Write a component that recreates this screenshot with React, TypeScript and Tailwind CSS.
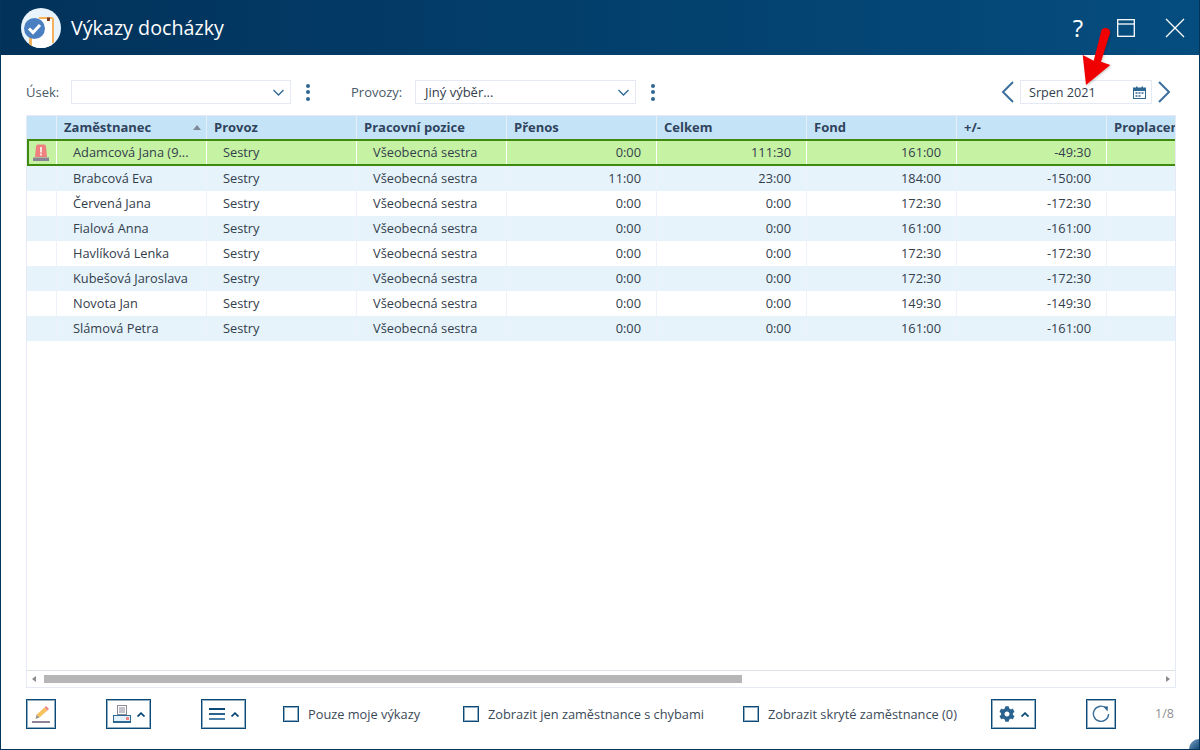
import { FaCog } from "react-icons/fa"

const rows = [
  { name: "Adamcová Jana (9...", prenos: "0:00", celkem: "111:30", fond: "161:00", diff: "-49:30" },
  { name: "Brabcová Eva", prenos: "11:00", celkem: "23:00", fond: "184:00", diff: "-150:00" },
  { name: "Červená Jana", prenos: "0:00", celkem: "0:00", fond: "172:30", diff: "-172:30" },
  { name: "Fialová Anna", prenos: "0:00", celkem: "0:00", fond: "161:00", diff: "-161:00" },
  { name: "Havlíková Lenka", prenos: "0:00", celkem: "0:00", fond: "172:30", diff: "-172:30" },
  { name: "Kubešová Jaroslava", prenos: "0:00", celkem: "0:00", fond: "172:30", diff: "-172:30" },
  { name: "Novota Jan", prenos: "0:00", celkem: "0:00", fond: "149:30", diff: "-149:30" },
  { name: "Slámová Petra", prenos: "0:00", celkem: "0:00", fond: "161:00", diff: "-161:00" },
]

const headers = ["Provoz", "Pracovní pozice", "Přenos", "Celkem", "Fond", "+/-", "Proplacené"]

const btn = "h-[30px] border border-[#0b4a78] shadow-[inset_0_0_0_1px_rgba(11,74,120,0.45)] flex items-center"

function AppLogo() {
  return (
    <svg width="40" height="40" viewBox="0 0 40 40" className="shrink-0">
      <defs>
        <clipPath id="logoClip">
          <circle cx="20" cy="20" r="20" />
        </clipPath>
      </defs>
      <circle cx="20" cy="20" r="20" fill="#e8f3fb" />
      <g clipPath="url(#logoClip)">
        <rect x="8" y="26" width="3" height="13" fill="#f5b25c" />
        <path d="M18 9 H30 A3 3 0 0 1 33 12 V35 H31 V11 H18 Z" fill="#f5b25c" />
        <rect x="11" y="11" width="20" height="29" fill="#ffffff" />
        <rect x="26" y="9.5" width="3" height="3.5" fill="#7a3b22" />
      </g>
      <circle cx="13.5" cy="20.5" r="10.5" fill="#4a7fc1" />
      <path d="M8 20.5 L12 24.5 L19 17" fill="none" stroke="#ffffff" strokeWidth="3" />
    </svg>
  )
}

function Dots() {
  return (
    <div className="flex flex-col gap-[2.5px] w-[4px]">
      <span className="w-[4px] h-[4px] rounded-full bg-[#2f6793]" />
      <span className="w-[4px] h-[4px] rounded-full bg-[#2f6793]" />
      <span className="w-[4px] h-[4px] rounded-full bg-[#2f6793]" />
    </div>
  )
}

function Caret() {
  return (
    <svg width="11" height="7" viewBox="0 0 11 7" fill="none" stroke="#2f6793" strokeWidth="1.3">
      <path d="M0.5 1 L5.5 6 L10.5 1" />
    </svg>
  )
}

function UpCaret() {
  return (
    <svg width="8" height="5" viewBox="0 0 8 5" fill="none" stroke="#0b4a78" strokeWidth="1.8" className="shrink-0">
      <path d="M0.5 4.5 L4 1.2 L7.5 4.5" />
    </svg>
  )
}

function Arrow({ d }: { d: string }) {
  return (
    <svg width="13" height="22" viewBox="0 0 13 22" fill="none" stroke="#3d6f9c" strokeWidth="2" className="shrink-0">
      <path d={d} />
    </svg>
  )
}

function Alarm() {
  return (
    <svg width="16" height="17" viewBox="0 0 16 17">
      <path d="M2 13 L3 2.5 A2 2 0 0 1 5 0.5 H11 A2 2 0 0 1 13 2.5 L14 13 Z" fill="#f07f7f" />
      <rect x="7" y="3" width="2" height="5.5" fill="#fbe3e0" />
      <rect x="7" y="9.5" width="2" height="2" fill="#fbe3e0" />
      <rect x="0" y="13.5" width="16" height="3.5" fill="#8d8397" />
    </svg>
  )
}

function FooterCheck({ label, className }: { label: string; className: string }) {
  return (
    <label className={`flex items-center gap-[9px] ${className}`}>
      <span className="w-[16px] h-[16px] border border-[#0b4a78] shadow-[inset_0_0_0_1px_rgba(11,74,120,0.45)] bg-white" />
      <span className="pt-[2px] text-[12.8px] text-[#3b4a58]">{label}</span>
    </label>
  )
}

export default function App() {
  return (
    <div
      className="relative w-[1200px] h-[750px] flex flex-col bg-white overflow-hidden border-x border-b border-[#03355a] text-[#33404c]"
      style={{ fontFamily: '"Open Sans", sans-serif' }}
    >
      {/* Title bar */}
      <div className="h-[55px] -mx-px shrink-0 flex items-center pl-[21px] bg-gradient-to-r from-[#02325a] to-[#054d7f]">
        <AppLogo />
        <span className="ml-[10px] text-[19.7px] text-white leading-none">Výkazy docházky</span>
        <div className="ml-auto flex items-center">
          <span className="text-[24px] text-white leading-none w-[20px] text-center">?</span>
          <svg width="18" height="18" viewBox="0 0 18 18" className="ml-[29px]" fill="none" stroke="#fff" strokeWidth="1.3">
            <rect x="0.7" y="0.7" width="16.6" height="16.6" />
            <path d="M0.7 5 H17.3" />
          </svg>
          <svg width="20" height="20" viewBox="0 0 20 20" className="ml-[30px] mr-[15px]" fill="none" stroke="#fff" strokeWidth="1.3">
            <path d="M1 1 L19 19 M19 1 L1 19" />
          </svg>
        </div>
      </div>

      {/* Filters */}
      <div className="h-[24px] mt-[25px] shrink-0 flex items-center pl-[25px] pr-[28px] text-[13px]">
        <span className="w-[45px] pt-[2px] text-[#4b5a68]">Úsek:</span>
        <div className="w-[220px] h-[24px] border border-[#e4e9f5] flex items-center justify-end pr-[6px]">
          <Caret />
        </div>
        <div className="ml-[15px]"><Dots /></div>
        <span className="ml-[41px] w-[64px] pt-[2px] text-[#4b5a68]">Provozy:</span>
        <div className="w-[221px] h-[24px] border border-[#e4e9f5] flex items-center justify-between pl-[9px] pr-[6px]">
          <span className="pt-[2px]">Jiný výběr...</span>
          <Caret />
        </div>
        <div className="ml-[15px]"><Dots /></div>
        <div className="ml-auto flex items-center gap-[6px]">
          <Arrow d="M12 1 L2 11 L12 21" />
          <div className="w-[132px] h-[24px] border border-[#e4e9f5] flex items-center justify-between pl-[8px] pr-[5px] text-[12.6px]">
            <span className="pt-[2px]">Srpen 2021</span>
            <svg width="13" height="13" viewBox="0 0 13 13">
              <rect x="0.5" y="2" width="12" height="10.5" fill="#fff" stroke="#2f6793" />
              <rect x="0.5" y="2" width="12" height="3" fill="#2f6793" />
              <rect x="3" y="0.5" width="1.5" height="2.5" fill="#2f6793" />
              <rect x="8.5" y="0.5" width="1.5" height="2.5" fill="#2f6793" />
              <path d="M2.5 7 H4.5 M5.5 7 H7.5 M8.5 7 H10.5 M2.5 10 H4.5 M5.5 10 H7.5" stroke="#2f6793" strokeWidth="1.5" />
            </svg>
          </div>
          <Arrow d="M1 1 L11 11 L1 21" />
        </div>
      </div>

      {/* Table */}
      <div className="ml-[25px] mt-[11px] w-[1150px] h-[573px] shrink-0 flex flex-col border border-[#e6eaf6]">
        <div className="flex-1 min-h-0 overflow-hidden">
          <div className="flex h-[23px] bg-[#c5e3f6] text-[13px] font-bold text-[#2f435e] w-[1300px]">
            <div className="w-[30px] border-r border-[#e6eef8]" />
            <div className="w-[150px] flex items-center justify-between pl-[7px] pr-[5px] border-r border-[#e6eef8]">
              <span>Zaměstnanec</span>
              <span className="w-0 h-0 border-x-[4.5px] border-x-transparent border-b-[5px] border-b-[#7c8a98]" />
            </div>
            {headers.map((h) => (
              <div key={h} className="w-[150px] flex items-center pl-[7px] border-r border-[#e6eef8]">{h}</div>
            ))}
          </div>
          {rows.map((r, i) => {
            const selected = i === 0
            const rowClass = selected
              ? "h-[27px] bg-[#c6f2a4] border-y-2 border-l-2 border-[#3f8a0f]"
              : i % 2 === 1
                ? "h-[25px] bg-[#e6f3fb]"
                : "h-[25px] bg-white"
            const sep = selected ? "border-white" : "border-[#edf1f8]"
            const pad = selected ? "pt-[1px]" : ""
            return (
              <div key={r.name} className={`flex w-[1300px] text-[12.8px] text-[#33404c] ${rowClass}`}>
                <div className={`flex items-center pl-[4px] border-r ${sep} ${selected ? "w-[28px]" : "w-[30px]"}`}>
                  {selected && <Alarm />}
                </div>
                <div className={`w-[150px] flex items-center pl-[16px] border-r whitespace-nowrap ${sep} ${pad}`}>{r.name}</div>
                <div className={`w-[150px] flex items-center pl-[16px] border-r ${sep} ${pad}`}>Sestry</div>
                <div className={`w-[150px] flex items-center pl-[16px] border-r ${sep} ${pad}`}>Všeobecná sestra</div>
                <div className={`w-[150px] flex items-center justify-end pr-[15px] border-r ${sep} ${pad}`}>{r.prenos}</div>
                <div className={`w-[150px] flex items-center justify-end pr-[15px] border-r ${sep} ${pad}`}>{r.celkem}</div>
                <div className={`w-[150px] flex items-center justify-end pr-[15px] border-r ${sep} ${pad}`}>{r.fond}</div>
                <div className={`w-[150px] flex items-center justify-end pr-[15px] border-r ${sep} ${pad}`}>{r.diff}</div>
                <div className={`w-[150px] border-r ${sep}`} />
              </div>
            )
          })}
        </div>
        {/* Horizontal scrollbar */}
        <div className="h-[17px] shrink-0 border-t border-[#dfdfe6] flex items-center px-[5px]">
          <span className="w-0 h-0 border-y-[3px] border-y-transparent border-r-[4px] border-r-[#8a8a8a]" />
          <div className="ml-[8px] w-[698px] h-[8px] bg-[#b6b6b6]" />
          <span className="ml-auto w-0 h-0 border-y-[3px] border-y-transparent border-l-[4px] border-l-[#8a8a8a]" />
        </div>
      </div>

      {/* Footer */}
      <div className="mt-[11px] h-[30px] shrink-0 flex items-center pl-[25px]">
        <button className={`${btn} w-[30px] justify-center`}>
          <svg width="28" height="28" viewBox="0 0 28 28" className="shrink-0">
            <path d="M9.6 14.5 L17.6 7.5 L20.4 10.5 L12.4 17.5 Z" fill="#f7c15c" />
            <path d="M17.6 7.5 L19 6 L22 9 L20.4 10.5 Z" fill="#ef7f86" />
            <path d="M9.6 14.5 L12.4 17.5 L8.5 19 Z" fill="#9a8f8a" />
            <rect x="5" y="21" width="18" height="2" fill="#8f8398" />
          </svg>
        </button>
        <button className={`${btn} ml-[50px] w-[45px] pl-[6px] gap-[6px]`}>
          <svg width="18" height="20" viewBox="0 0 18 20" className="shrink-0">
            <rect x="4.5" y="1.5" width="9" height="9" fill="#fff" stroke="#8b8b93" />
            <rect x="6" y="3" width="6" height="6" fill="#c6c2cc" />
            <rect x="0.5" y="11.5" width="17" height="7" fill="#e4f2fb" stroke="#2f6793" />
            <rect x="0" y="17" width="18" height="2" fill="#2f6793" />
            <rect x="13" y="13" width="3" height="3" fill="#f0828a" />
          </svg>
          <UpCaret />
        </button>
        <button className={`${btn} ml-[50px] w-[45px] pl-[7px] gap-[6px]`}>
          <span className="flex flex-col gap-[3px]">
            <span className="block w-[16px] h-[2px] bg-[#0b4a78]" />
            <span className="block w-[16px] h-[2px] bg-[#2b6390]" />
            <span className="block w-[16px] h-[2px] bg-[#4c80a8]" />
          </span>
          <UpCaret />
        </button>
        <FooterCheck label="Pouze moje výkazy" className="ml-[37px] w-[180px]" />
        <FooterCheck label="Zobrazit jen zaměstnance s chybami" className="w-[280px]" />
        <FooterCheck label="Zobrazit skryté zaměstnance (0)" className="w-[248px]" />
        <button className={`${btn} w-[45px] pl-[7px] gap-[6px]`}>
          <FaCog size={16} className="text-[#2b6390] shrink-0" />
          <UpCaret />
        </button>
        <button className={`${btn} ml-[50px] w-[30px] justify-center`}>
          <svg width="18" height="18" viewBox="0 0 18 18" fill="none">
            <path d="M14.5 3.5 A7.6 7.6 0 1 0 16.6 9" stroke="#3a6f9a" strokeWidth="1.4" />
            <path d="M11.5 1.5 L16 1.5 L15.5 6.5 Z" fill="#2b6390" />
          </svg>
        </button>
        <span className="ml-auto mr-[25px] text-[12.5px] text-[#8f8f8f]">1/8</span>
      </div>

      {/* Red arrow annotation */}
      <svg width="40" height="66" viewBox="0 0 40 66" className="absolute left-[1075px] top-[26px] pointer-events-none drop-shadow-[1px_1px_1px_rgba(0,0,0,0.2)]">
        <circle cx="29.5" cy="6.5" r="4.6" fill="#f00000" />
        <path d="M10 59 L6.7 29 L17.7 34.7 L25 5.7 L34 7 L25 35.7 L34.3 39 Z" fill="#f00000" />
      </svg>

      {/* Resize corner */}
      <div className="absolute right-0 bottom-0 w-[10px] h-[10px] rounded-tl-full bg-gradient-to-br from-[#7fa6c6] to-[#0b4a78]" />
    </div>
  )
}
